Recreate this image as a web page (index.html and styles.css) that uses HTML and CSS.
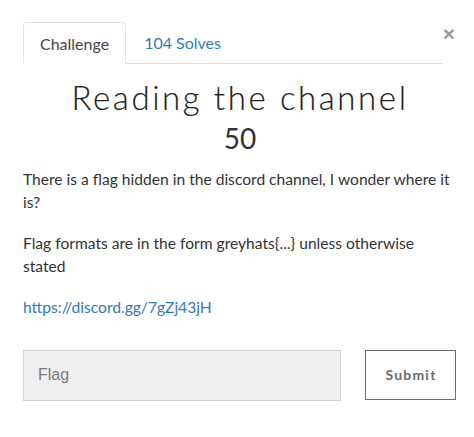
FILE: index.html
```html
<!DOCTYPE html>
<html>
<head>
<meta charset="utf-8">
<link rel="stylesheet" href="styles.css">
</head>
<body>
<div class="modal">
  <div class="head">
    <ul class="tabs">
      <li class="tab active">Challenge</li>
      <li class="tab link">104 Solves</li>
    </ul>
    <span class="close">&times;</span>
  </div>
  <h1 class="title">Reading the channel</h1>
  <div class="value">50</div>
  <div class="desc">
    <p>There is a flag hidden in the discord channel, I wonder where it is?</p>
    <p>Flag formats are in the form greyhats{...} unless otherwise stated</p>
    <p><a href="#">https://discord.gg/7gZj43jH</a></p>
  </div>
  <form class="submit-row">
    <input class="flag" type="text" placeholder="Flag">
    <button class="btn" type="button">Submit</button>
  </form>
</div>
</body>
</html>
```
FILE: styles.css
```css
* { box-sizing: border-box; }
body { margin: 0; background: #fff; font-family: Lato, "Open Sans", sans-serif; color: #333; }
.modal { padding: 22px 17px 0 23px; width: 474px; }
.head { display: flex; align-items: flex-start; }
.tabs { list-style: none; margin: 0; padding: 0; display: flex; width: 420px; border-bottom: 1px solid #dedede; height: 42px; }
.tab { height: 42px; padding: 0 16px; font-size: 16px; line-height: 41px; }
.tab.active { border: 1px solid #e3e3e3; border-bottom-color: #fff; border-radius: 4px 4px 0 0; color: #444; background: #fff; }
.tab.link { color: #337ab7; padding-left: 18px; }
.close { margin-left: auto; margin-top: 1px; margin-right: 2px; font-family: "Liberation Sans", sans-serif; font-size: 21px; font-weight: bold; color: #999; line-height: 22px; }
.title { margin: 13px 0 0; text-align: center; font-family: Lato, sans-serif; font-weight: 300; font-size: 33px; letter-spacing: 2.6px; color: #222; line-height: 40px; -webkit-text-stroke: 0.15px #222; }
.value { text-align: center; font-size: 28px; line-height: 34px; color: #333; margin-top: 4px; }
.desc { margin-top: 13px; font-size: 15.6px; line-height: 22.5px; color: #333; }
.desc p { margin: 0 0 19px; }
.desc a { color: #337ab7; text-decoration: none; }
.submit-row { display: flex; align-items: flex-start; margin-top: 31px; }
.flag { width: 318px; height: 51px; background: #efefef; border: 1px solid #d0d0d0; border-radius: 0; padding: 0 14px; font-family: "Liberation Sans", sans-serif; font-size: 16px; color: #555; outline: none; }
.flag::placeholder { color: #7a7a7a; }
.btn { margin-left: 24px; width: 91px; height: 50px; background: #fff; border: 1px solid #6e6e6e; font-family: Lato, sans-serif; font-weight: bold; font-size: 14px; letter-spacing: 1.2px; color: #6a6a6a; padding: 0 0 0 1px; }
```
